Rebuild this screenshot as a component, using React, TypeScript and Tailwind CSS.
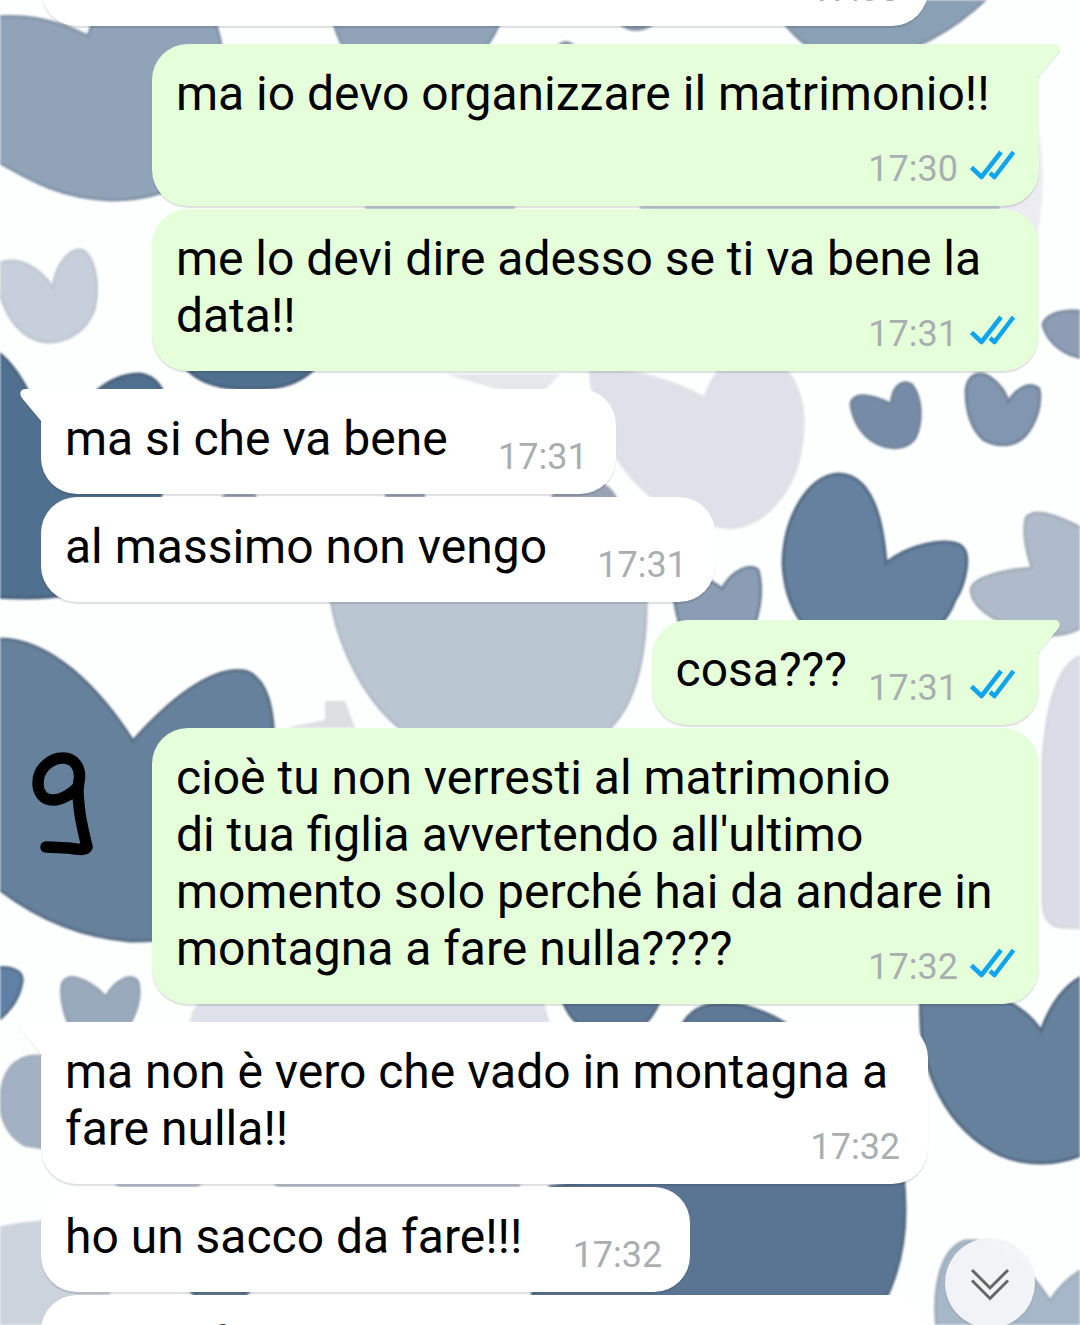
import React from "react";

type Message = {
  id: number;
  text: string;
  time: string;
  out?: boolean;
  first?: boolean;
  wide?: boolean;
  indent?: boolean;
};

const messages: Message[] = [
  { id: 1, text: "", time: "17:30", wide: true },
  { id: 2, text: "ma io devo organizzare il matrimonio!!", time: "17:30", out: true, first: true },
  { id: 3, text: "me lo devi dire adesso se ti va bene la data!!", time: "17:31", out: true },
  { id: 4, text: "ma si che va bene", time: "17:31", first: true },
  { id: 5, text: "al massimo non vengo", time: "17:31" },
  { id: 6, text: "cosa???", time: "17:31", out: true, first: true },
  {
    id: 7,
    text: "cioè tu non verresti al matrimonio\ndi tua figlia avvertendo all'ultimo momento solo perché hai da andare in montagna a fare nulla????",
    time: "17:32",
    out: true,
  },
  { id: 8, text: "ma non è vero che vado in montagna a fare nulla!!", time: "17:32", first: true },
  { id: 9, text: "ho un sacco da fare!!!", time: "17:32" },
  { id: 10, text: "f", time: "17:32", wide: true, indent: true },
];

function ReadTicks() {
  return (
    <svg
      className="mb-1.5 h-8 w-[45px]"
      viewBox="0 0 45 32"
      fill="none"
      stroke="#0ea5ee"
      strokeWidth="4.5"
      strokeLinejoin="round"
      role="img"
      aria-label="Letto"
    >
      <path d="M1.5 17.5 L11.5 27 L31 2" />
      <path d="M20 23 L24.5 27 L43.5 2" />
    </svg>
  );
}

function Tail({ out }: { out?: boolean }) {
  return out ? (
    <svg className="absolute top-0 left-full -ml-px h-[34px] w-[22px] text-[#e5ffdb]" viewBox="0 0 22 34" aria-hidden="true">
      <path d="M0 2 H16 C23 2 24 7 20 11 L1 34 H0Z" fill="#000" opacity="0.08" />
      <path d="M0 0 H16 C22 0 23 5 20 9 L1 32 H0Z" fill="currentColor" />
    </svg>
  ) : (
    <svg className="absolute top-0 right-full -mr-px h-[34px] w-[22px] text-white" viewBox="0 0 22 34" aria-hidden="true">
      <path d="M22 1 H6 C-1 1 -2 6 2 10 L21 34 H22Z" fill="#000" opacity="0.08" />
      <path d="M22 0 H6 C0 0 -1 5 2 9 L21 32 H22Z" fill="currentColor" />
    </svg>
  );
}

function Bubble({ m }: { m: Message }) {
  const side = m.out ? "self-end bg-[#e5ffdb]" : "self-start bg-white";
  const corner = m.first ? (m.out ? "rounded-tr-none" : "rounded-tl-none") : "";
  const gap = m.first ? "mt-[18px]" : "mt-[3px]";
  return (
    <li
      className={`relative max-w-8/9 shrink-0 rounded-[36px] px-6 pt-[21px] pb-[27px] shadow-[0_2px_1px_rgba(0,0,0,0.12)] ${side} ${corner} ${gap} ${m.wide ? "w-full" : ""}`}
    >
      {m.first && <Tail out={m.out} />}
      <p className={`text-[48px] leading-[57px] whitespace-pre-line text-black ${m.indent ? "indent-36" : ""}`}>
        {m.text}
        <span className={`inline-block h-px ${m.out ? "w-[168px]" : "w-36"}`} />
      </p>
      <span className="absolute right-6 bottom-4 flex items-center gap-3 text-[36px] leading-[42px] text-[#a9aeb1]">
        <time className={m.out ? "" : "pr-1"}>{m.time}</time>
        {m.out && <ReadTicks />}
      </span>
    </li>
  );
}

function Wallpaper() {
  return (
    <svg
      className="absolute inset-0 h-full w-full blur-[1px]"
      viewBox="0 0 1080 1325"
      preserveAspectRatio="xMidYMin slice"
      aria-hidden="true"
    >
      <rect width="1080" height="1325" fill="#fdfefe" />
      <g strokeWidth="3">
        <g fill="#91a3b9" stroke="#8495a8">
          <path d="M-5 17 C30 15 55 20 88 36 C93 20 110 -20 160 -30 C200 -20 215 10 222 50 C230 120 220 200 110 200 C60 198 30 180 -5 160Z" />
          <path d="M330 10 C340 50 360 90 410 90 C460 90 490 50 505 10Z" />
          <path d="M770 0 C790 40 830 70 870 62 C920 50 960 25 990 -5Z" fill="#8aa0b5" />
        </g>
        <path d="M610 10 C620 38 650 38 668 10Z M555 48 Q565 34 578 48Z" fill="#8b96aa" stroke="none" />
        <path d="M365 200 H515 V215 H365Z M640 200 H1000 V215 H640Z" fill="#c6cbd9" stroke="none" />
        <path d="M1030 100 Q1052 160 1036 245 L1000 215Z" fill="#ececf2" stroke="none" />
        <path d="M-2 264 C18 255 40 268 53 288 C56 262 72 246 84 251 C97 262 99 290 94 310 C84 336 60 345 40 341 C16 334 4 312 -2 285Z" fill="#c6cfdb" stroke="#c0c8d2" />
        <path d="M1085 312 C1062 308 1045 315 1043 325 C1048 345 1068 357 1085 358Z" fill="#8e9cb5" stroke="#7f8fa5" />
        <g fill="#50708f" stroke="#48627d">
          <path d="M-5 350 C12 362 24 382 32 400 L70 440 C75 400 110 374 140 374 C170 378 175 420 165 480 C150 540 110 592 50 597 C30 599 10 598 -5 597Z" />
          <path d="M180 360 C195 385 225 389 250 389 C285 389 305 382 322 360Z" />
        </g>
        <path d="M590 372 C630 365 680 385 705 398 C712 375 725 355 760 355 C800 365 806 410 802 440 C797 490 765 526 730 528 C660 520 600 470 590 372Z" fill="#dee1e9" stroke="#e0e2e8" />
        <path d="M445 374 H560 L545 390 H500Z" fill="#e5e7eb" stroke="none" />
        <path d="M225 493 H255 L258 500 H220Z M385 493 H425 V500 H385Z M560 478 C590 475 612 482 618 500 H550Z" fill="#98a4b5" stroke="none" />
        <g fill="#768ba8" stroke="#73869b">
          <path d="M851 404 C853 392 870 394 891 404 C893 386 902 379 912 385 C923 400 922 424 915 438 C907 450 890 450 876 443 C861 435 853 420 851 404Z" />
          <path d="M966 390 C968 374 980 370 991 378 C999 384 1006 392 1008 402 C1018 386 1031 382 1039 389 C1042 405 1036 423 1025 436 C1014 447 997 447 984 440 C970 428 966 410 966 390Z" fill="#8296b1" />
          <path d="M670 560 C690 572 710 578 722 589 C732 570 750 563 758 570 C764 590 760 620 745 645 H690 C678 630 674 605 670 560Z" fill="#8b9db5" />
        </g>
        <path d="M838 474 C868 474 882 510 886 563 C910 544 945 538 960 545 C973 552 965 585 955 600 C940 640 900 655 850 650 C805 645 785 605 783 563 C784 515 810 475 838 474Z" fill="#65819f" stroke="#536b84" />
        <path d="M1085 530 C1062 518 1035 506 1026 518 C1022 535 1027 553 1032 568 C1005 570 972 577 971 590 C972 612 1010 630 1045 635 C1060 636 1075 632 1085 625Z" fill="#afbacb" stroke="#a5afbb" />
        <path d="M329 580 C332 640 365 700 400 728 C460 770 560 760 610 728 C638 700 648 650 646 580Z" fill="#bbc6d3" stroke="#b3bdc8" />
        <path d="M285 728 L325 720 V701 H345 L355 728Z" fill="#dcdfe0" stroke="none" />
        <path d="M-5 639 C50 636 100 690 133 741 C165 705 210 665 245 671 C268 678 274 710 274 750 V860 C250 920 190 942 130 941 C70 936 25 910 -5 886Z" fill="#66819b" stroke="#5b7087" />
        <path d="M1085 655 C1060 660 1047 700 1043 760 V900 Q1043 925 1060 927 L1085 928Z" fill="#dadde8" stroke="#d6d9df" />
        <path d="M-5 968 C10 966 24 970 22 982 C19 1000 8 1014 -5 1022Z" fill="#6180a5" stroke="#566f89" />
        <path d="M62 985 C65 971 88 978 106 997 C115 980 132 972 138 982 C142 1000 135 1018 122 1035 H75 C65 1020 60 1000 62 985Z" fill="#9aaabd" stroke="#96a4b3" />
        <path d="M190 1022 C192 1000 210 990 250 990 H540 L552 1030 H190Z" fill="#dee1ea" stroke="none" />
        <path d="M50 1058 C28 1052 10 1060 4 1080 C-2 1100 -2 1130 25 1145 L50 1149Z" fill="#a2b1c3" stroke="#a2afbd" />
        <g fill="#5e7997" stroke="#536a82">
          <path d="M560 990 C568 1030 600 1040 622 1035 C645 1030 655 1015 664 990Z" />
          <path d="M680 1030 C690 1005 712 1000 745 1006 C765 1012 785 1020 800 1035Z" />
          <path d="M921 1000 C950 980 1015 990 1041 1031 C1052 1000 1068 983 1085 975 V1153 C1060 1166 1025 1166 1000 1155 C950 1130 917 1075 921 1000Z" fill="#66819d" />
          <path d="M550 1187 Q700 1160 903 1175 C908 1220 905 1265 880 1310 H530Z" fill="#5a7594" />
          <path d="M185 1285 H255 L240 1300 H200Z" />
        </g>
        <path d="M-5 1228 C15 1222 30 1222 45 1220 L110 1292 V1330 H-5Z" fill="#cbd3dd" stroke="none" />
        <path d="M112 1180 H205 L195 1190 H120Z M270 1180 H520 V1190 H280Z" fill="#bfc6d1" stroke="none" />
        <path d="M937 1330 C932 1285 942 1248 965 1241 C1000 1238 1030 1270 1050 1301 C1060 1285 1072 1275 1085 1268 V1330Z" fill="#a6b7c9" stroke="#a0aebb" />
      </g>
    </svg>
  );
}

function HandwrittenNine() {
  return (
    <svg
      className="absolute top-[750px] left-7 h-[108px] w-[68px]"
      viewBox="28 750 68 108"
      fill="none"
      stroke="#000"
      strokeWidth="11.5"
      strokeLinecap="round"
      strokeLinejoin="round"
      role="img"
      aria-label="9"
    >
      <path d="M78 787 C73 793 62 800 53 800 C43 800 38 792 38 783 C38 769 50 758 63 758 C74 758 80 767 79.5 777 C79 783 78 785 78 790 C78 799 79 806 80 814 C82 827 85 838 87 847 C85 851 78 849 68 848 L46 847" />
    </svg>
  );
}

export default function App() {
  return (
    <main className="relative h-screen overflow-hidden bg-white font-['Roboto',sans-serif]">
      <Wallpaper />
      <ul className="relative -mt-[82px] flex flex-col px-[41px]">
        {messages.map((m) => (
          <Bubble key={m.id} m={m} />
        ))}
      </ul>
      <HandwrittenNine />
      <button
        type="button"
        aria-label="Vai in fondo"
        className="absolute right-[45px] -bottom-[3px] flex size-[90px] items-center justify-center rounded-full bg-[#f4f5f7]/97 shadow-[0_1px_2px_rgba(0,0,0,0.15)]"
      >
        <svg className="size-10" viewBox="0 0 40 40" fill="none" stroke="#666" strokeWidth="3" aria-hidden="true">
          <path d="M2 7 L20 25 L38 7 M2 17.5 L20 35.5 L38 17.5" />
        </svg>
      </button>
    </main>
  );
}
